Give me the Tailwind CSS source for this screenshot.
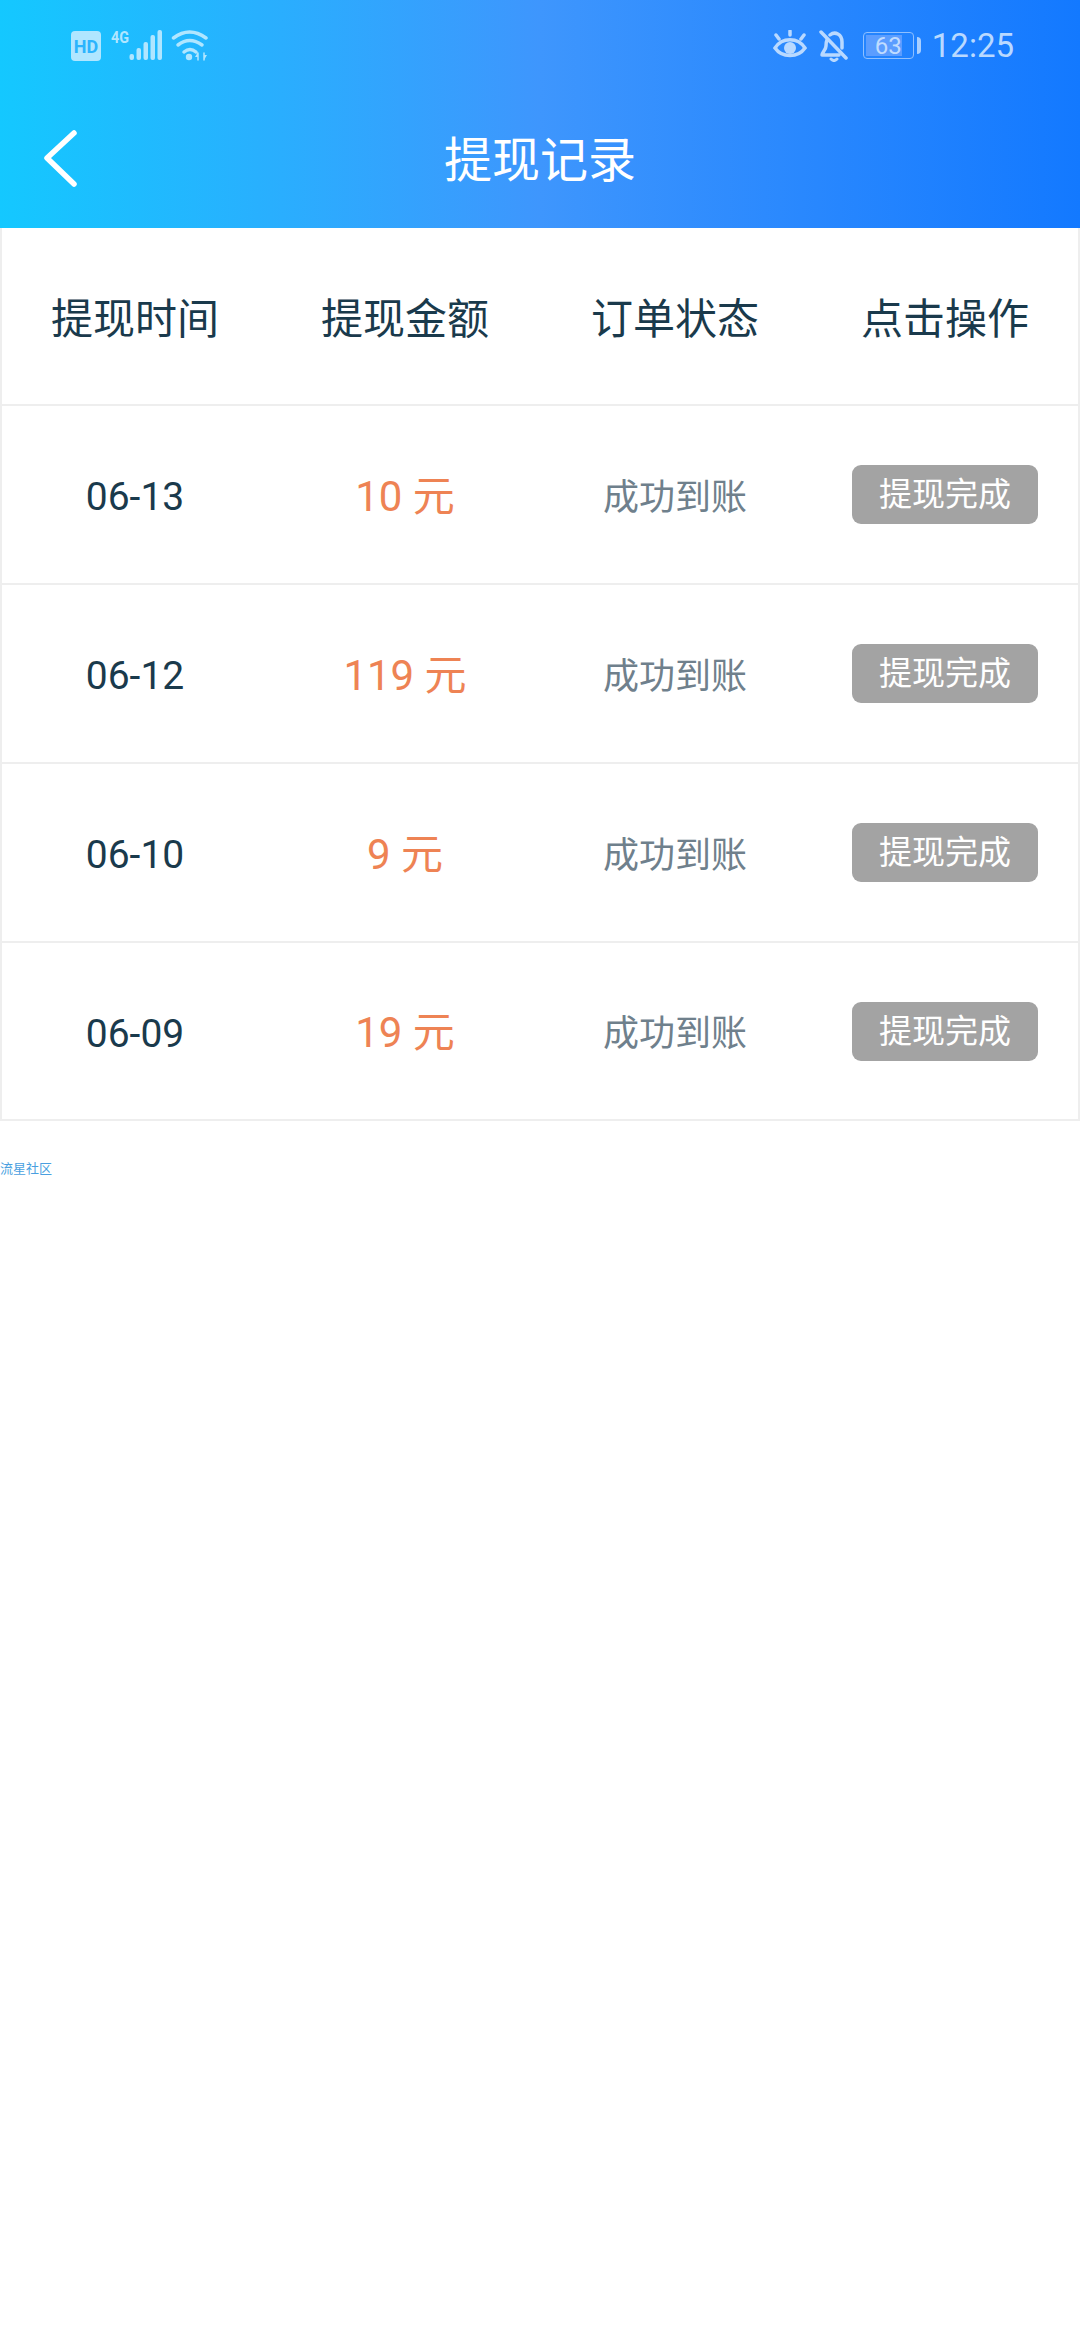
<!DOCTYPE html>
<html lang="zh-CN">
<head>
    <meta charset="UTF-8">
    <meta name="viewport" content="width=device-width, initial-scale=1.0">
    <title>提现记录</title>
    <script src="https://cdn.jsdelivr.net/npm/@tailwindcss/browser@4"></script>
</head>
<body class="w-[1080px] h-[2340px] bg-white overflow-hidden font-['Roboto','Noto_Sans_CJK_SC',sans-serif]">
    <!-- Header -->
    <div class="h-[228px] bg-[linear-gradient(to_right,#14c8ff,#3e96fd_50%,#1379ff)] text-white">
        <!-- Status bar -->
        <div class="h-[92px] pt-[28px] pl-[71px] pr-[66px] flex justify-between items-start">
            <div class="flex items-start">
                <svg width="30" height="32" viewBox="0 0 30 32" class="mt-[3px]">
                    <rect width="30" height="30" rx="4" fill="#b0e6ff"/>
                    <text x="15" y="22" text-anchor="middle" font-family="Roboto" font-weight="700" font-size="18" fill="#2cb4fd">HD</text>
                </svg>
                <svg width="58" height="34" viewBox="0 0 58 34" class="ml-[10px]" fill="#b0e6ff">
                    <text x="0" y="15" font-family="Roboto" font-weight="700" font-size="17" textLength="18" lengthAdjust="spacingAndGlyphs">4G</text>
                    <rect x="18.5" y="26" width="4.5" height="6" rx="2"/>
                    <rect x="25.5" y="20" width="4.5" height="12" rx="2"/>
                    <rect x="32.5" y="14" width="4.5" height="18" rx="2"/>
                    <rect x="39.5" y="7" width="4.5" height="25" rx="2"/>
                    <rect x="46.5" y="2" width="4.5" height="30" rx="2"/>
                </svg>
                <svg width="38" height="32" viewBox="0 0 38 32" class="ml-[2px] mt-[2px]" fill="none" stroke="#b0e6ff" stroke-width="3.5" stroke-linecap="round">
                    <path d="M2.5 8Q18.5 -4 35 8"/>
                    <path d="M7 15Q18.5 6 31 15"/>
                    <path d="M13 22Q19 17 25 22"/>
                    <circle cx="18" cy="27" r="3.2" fill="#b0e6ff" stroke="none"/>
                    <path d="M27 23V30M33 23V30" stroke-width="1.5"/>
                    <path d="M27 22L24 27H27ZM33 30L36 25H33Z" fill="#b0e6ff" stroke="none"/>
                </svg>
            </div>
            <div class="flex items-start">
                <svg width="34" height="32" viewBox="0 0 34 32" class="mt-[2px]" fill="none" stroke="#b9d9ff" stroke-width="3.5" stroke-linecap="round">
                    <path d="M2 18C9 7 25 7 32 18C25 28 9 28 2 18Z"/>
                    <circle cx="17" cy="18" r="6" fill="#b9d9ff" stroke="none"/>
                    <path d="M17 1V5M3 5L6 9M31 5L28 9"/>
                </svg>
                <svg width="30" height="32" viewBox="0 0 30 32" class="ml-[12px] mt-[2px]" fill="none" stroke="#b9d9ff" stroke-width="3.5" stroke-linecap="round" stroke-linejoin="round">
                    <path d="M2 2L27 28"/>
                    <path d="M8 10C7 12 7 14 7 16C7 20 3 22 3 25H20"/>
                    <path d="M11 5C16 1 23 4 23 12V18"/>
                    <path d="M12 29C14 31 16 31 18 29" stroke-width="3"/>
                </svg>
                <div class="ml-[14px] mt-[4px] w-[51px] h-[27px] border-[1.5px] border-[#8fc0ff] rounded-[4px] relative flex items-center">
                    <div class="absolute left-[2px] top-[2px] bottom-[2px] w-[36px] bg-[#5b9dff]"></div>
                    <span class="relative w-full text-center text-[24px] leading-none text-[#c0dcff]">63</span>
                </div>
                <div class="ml-[3px] mt-[9px] w-[4px] h-[17px] rounded-r-sm bg-[#a9cfff]"></div>
                <span class="ml-[11px] mt-[-1px] text-[33px] leading-[38px] text-[#b9d9ff]">12:25</span>
            </div>
        </div>
        <!-- Title bar -->
        <div class="relative h-[136px] flex items-start justify-center pt-[35px]">
            <svg width="40" height="64" viewBox="0 0 40 64" class="absolute left-[41px] top-[36px]" fill="none" stroke="white" stroke-width="5.5" stroke-linecap="round" stroke-linejoin="round">
                <path d="M33 5L6 30L33 56"/>
            </svg>
            <h1 class="text-[48px] leading-[68px] font-normal">提现记录</h1>
        </div>
    </div>

    <!-- Records table -->
    <div class="shadow-[inset_2px_0_0_#eeeeee,inset_-2px_0_0_#eeeeee] border-b-2 border-[#eeeeee]">
        <div class="h-[176px] pt-[6px] grid grid-cols-4 items-center text-center text-[42px] text-[#1a3a4c]">
            <div>提现时间</div>
            <div>提现金额</div>
            <div>订单状态</div>
            <div>点击操作</div>
        </div>

        <div class="h-[179px] border-t-2 border-[#eeeeee] grid grid-cols-4 items-center text-center">
            <div class="pt-[6px] text-[39px] text-[#1a3a4c]">06-13</div>
            <div class="pt-[3px] text-[42px] text-[#ee8354]">10 元</div>
            <div class="pt-[6px] text-[36px] text-[#6f808c]">成功到账</div>
            <div class="flex justify-center"><button class="w-[186px] h-[59px] pt-[1px] rounded-[9px] bg-[#a3a3a3] text-white text-[33px]">提现完成</button></div>
        </div>
        <div class="h-[179px] border-t-2 border-[#eeeeee] grid grid-cols-4 items-center text-center">
            <div class="pt-[6px] text-[39px] text-[#1a3a4c]">06-12</div>
            <div class="pt-[3px] text-[42px] text-[#ee8354]">119 元</div>
            <div class="pt-[6px] text-[36px] text-[#6f808c]">成功到账</div>
            <div class="flex justify-center"><button class="w-[186px] h-[59px] pt-[1px] rounded-[9px] bg-[#a3a3a3] text-white text-[33px]">提现完成</button></div>
        </div>
        <div class="h-[179px] border-t-2 border-[#eeeeee] grid grid-cols-4 items-center text-center">
            <div class="pt-[6px] text-[39px] text-[#1a3a4c]">06-10</div>
            <div class="pt-[3px] text-[42px] text-[#ee8354]">9 元</div>
            <div class="pt-[6px] text-[36px] text-[#6f808c]">成功到账</div>
            <div class="flex justify-center"><button class="w-[186px] h-[59px] pt-[1px] rounded-[9px] bg-[#a3a3a3] text-white text-[33px]">提现完成</button></div>
        </div>
        <div class="h-[178px] border-t-2 border-[#eeeeee] grid grid-cols-4 items-center text-center">
            <div class="pt-[6px] text-[39px] text-[#1a3a4c]">06-09</div>
            <div class="pt-[3px] text-[42px] text-[#ee8354]">19 元</div>
            <div class="pt-[6px] text-[36px] text-[#6f808c]">成功到账</div>
            <div class="flex justify-center"><button class="w-[186px] h-[59px] pt-[1px] rounded-[9px] bg-[#a3a3a3] text-white text-[33px]">提现完成</button></div>
        </div>
    </div>

    <div class="mt-[40px] text-[13px] leading-[16px] text-[#4a9fe0]">流星社区</div>
</body>
</html>
